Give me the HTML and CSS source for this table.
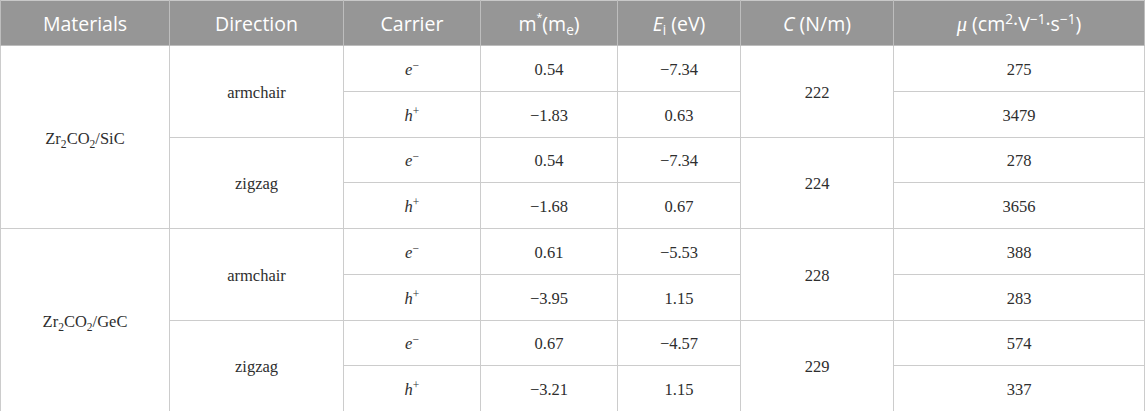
FILE: index.html
```html
<!DOCTYPE html>
<html>
<head>
<meta charset="utf-8">
<link rel="stylesheet" href="styles.css">
</head>
<body>
<table class="data">
  <colgroup>
    <col class="c1"><col class="c2"><col class="c3"><col class="c4"><col class="c5"><col class="c6"><col class="c7">
  </colgroup>
  <thead>
    <tr>
      <th>Materials</th>
      <th>Direction</th>
      <th>Carrier</th>
      <th>m<sup class="star">*</sup>(m<sub>e</sub>)</th>
      <th><i>E</i><sub>i</sub> (eV)</th>
      <th><i>C</i> (N/m)</th>
      <th><i class="mu">μ</i> (cm<sup>2</sup>·V<sup>−1</sup>·s<sup>−1</sup>)</th>
    </tr>
  </thead>
  <tbody>
    <tr>
      <td rowspan="4">Zr<sub>2</sub>CO<sub>2</sub>/SiC</td>
      <td rowspan="2">armchair</td>
      <td><i>e</i><sup>−</sup></td><td>0.54</td><td>−7.34</td>
      <td rowspan="2">222</td><td>275</td>
    </tr>
    <tr><td><i>h</i><sup>+</sup></td><td>−1.83</td><td>0.63</td><td>3479</td></tr>
    <tr>
      <td rowspan="2">zigzag</td>
      <td><i>e</i><sup>−</sup></td><td>0.54</td><td>−7.34</td>
      <td rowspan="2">224</td><td>278</td>
    </tr>
    <tr><td><i>h</i><sup>+</sup></td><td>−1.68</td><td>0.67</td><td>3656</td></tr>
    <tr>
      <td rowspan="4">Zr<sub>2</sub>CO<sub>2</sub>/GeC</td>
      <td rowspan="2">armchair</td>
      <td><i>e</i><sup>−</sup></td><td>0.61</td><td>−5.53</td>
      <td rowspan="2">228</td><td>388</td>
    </tr>
    <tr><td><i>h</i><sup>+</sup></td><td>−3.95</td><td>1.15</td><td>283</td></tr>
    <tr>
      <td rowspan="2">zigzag</td>
      <td><i>e</i><sup>−</sup></td><td>0.67</td><td>−4.57</td>
      <td rowspan="2">229</td><td>574</td>
    </tr>
    <tr><td><i>h</i><sup>+</sup></td><td>−3.21</td><td>1.15</td><td>337</td></tr>
  </tbody>
</table>
</body>
</html>
```
FILE: styles.css
```css
html, body {
  margin: 0;
  padding: 0;
  background: #ffffff;
}

.data {
  width: 1144px;
  border-collapse: collapse;
  table-layout: fixed;
  border: 1px solid #c8c8c8;
}

.c1 { width: 169px; }
.c2 { width: 174px; }
.c3 { width: 137px; }
.c4 { width: 137px; }
.c5 { width: 123px; }
.c6 { width: 153px; }
.c7 { width: 251px; }

.data th {
  background: #969696;
  color: #ffffff;
  font-family: "Open Sans", "DejaVu Sans", sans-serif;
  font-weight: 400;
  font-size: 19.5px;
  height: 44px;
  padding: 0;
  text-align: center;
  vertical-align: middle;
  border: 1px solid #bdbdbd;
  border-top: none;
}

.data td {
  font-family: "Liberation Serif", "DejaVu Serif", serif;
  font-size: 16.5px;
  color: #2e2e2e;
  height: 41.75px;
  padding: 3px 0 0 0;
  text-align: center;
  vertical-align: middle;
  border: 1px solid #cccccc;
}

.data sup, .data sub {
  font-size: 0.7em;
  line-height: 0;
}

.data th sub { vertical-align: -0.3em; }
.data th sup { vertical-align: 0.5em; }
.data th .star { font-size: 0.55em; vertical-align: 0.9em; }

.mu {
  font-family: "Liberation Serif", serif;
  font-size: 1.05em;
}
```
